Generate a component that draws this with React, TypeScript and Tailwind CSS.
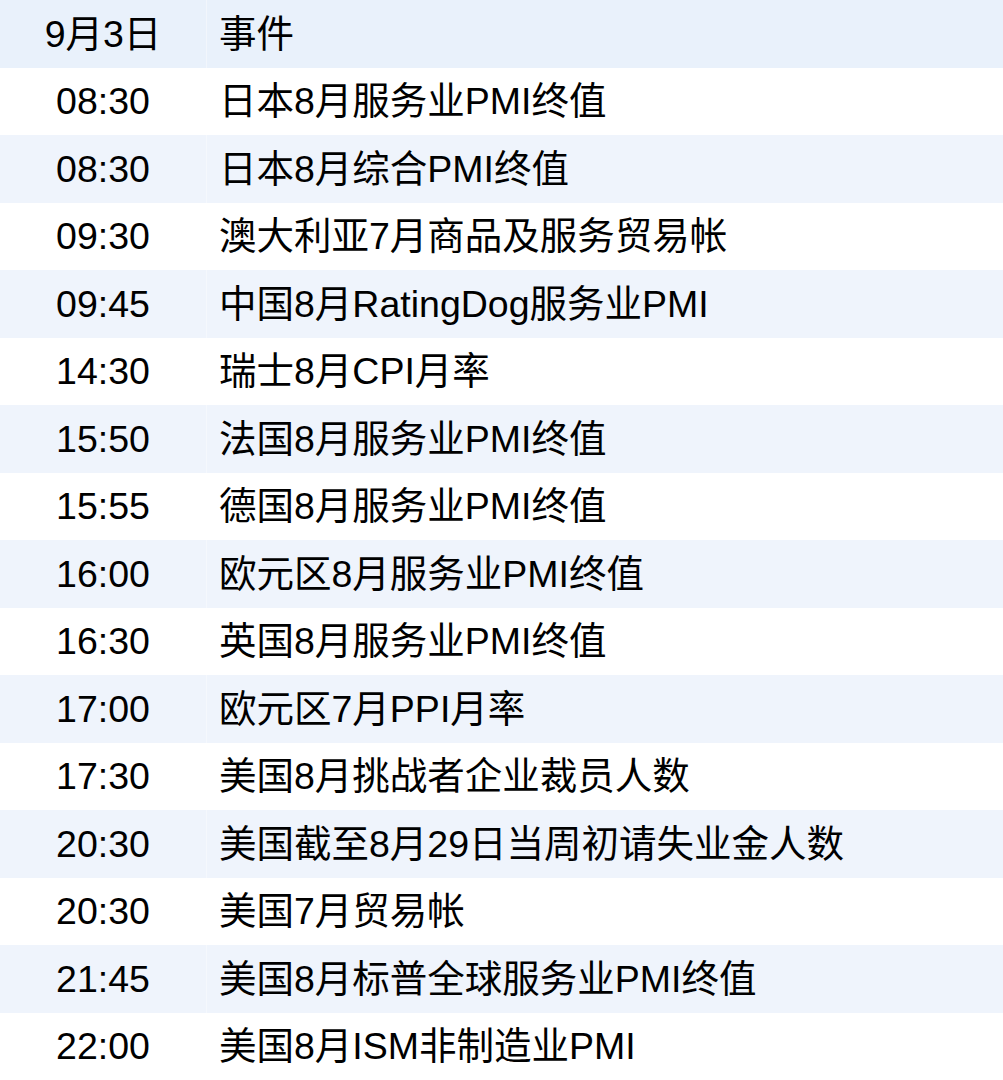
import React from 'react'

const rows: [string, string][] = [
    ["08:30", "日本8月服务业PMI终值"],
    ["08:30", "日本8月综合PMI终值"],
    ["09:30", "澳大利亚7月商品及服务贸易帐"],
    ["09:45", "中国8月RatingDog服务业PMI"],
    ["14:30", "瑞士8月CPI月率"],
    ["15:50", "法国8月服务业PMI终值"],
    ["15:55", "德国8月服务业PMI终值"],
    ["16:00", "欧元区8月服务业PMI终值"],
    ["16:30", "英国8月服务业PMI终值"],
    ["17:00", "欧元区7月PPI月率"],
    ["17:30", "美国8月挑战者企业裁员人数"],
    ["20:30", "美国截至8月29日当周初请失业金人数"],
    ["20:30", "美国7月贸易帐"],
    ["21:45", "美国8月标普全球服务业PMI终值"],
    ["22:00", "美国8月ISM非制造业PMI"],
]

export default function App() {
    return (
        <div
            className="grid h-[1080px] w-[1003px] grid-rows-[repeat(16,1fr)] bg-white text-[37.5px] leading-none text-black"
            style={{ fontFamily: '"Liberation Sans", Arial, "Noto Sans CJK SC", sans-serif' }}
        >
            <div className="flex bg-[#e9f1fb]">
                <div className="flex w-[206px] items-center justify-center pt-[1px]">9月3日</div>
                <div className="flex flex-1 items-center border-l border-white/40 pl-[12px] pt-[1px]">事件</div>
            </div>
            {rows.map(([time, event], i) => (
                <div key={i} className={i % 2 === 0 ? "flex bg-white" : "flex bg-[#eff4fc]"}>
                    <div className="flex w-[206px] items-center justify-center pt-[1px]">{time}</div>
                    <div className="flex flex-1 items-center border-l border-white/40 pl-[12px] pt-[1px]">{event}</div>
                </div>
            ))}
        </div>
    )
}
